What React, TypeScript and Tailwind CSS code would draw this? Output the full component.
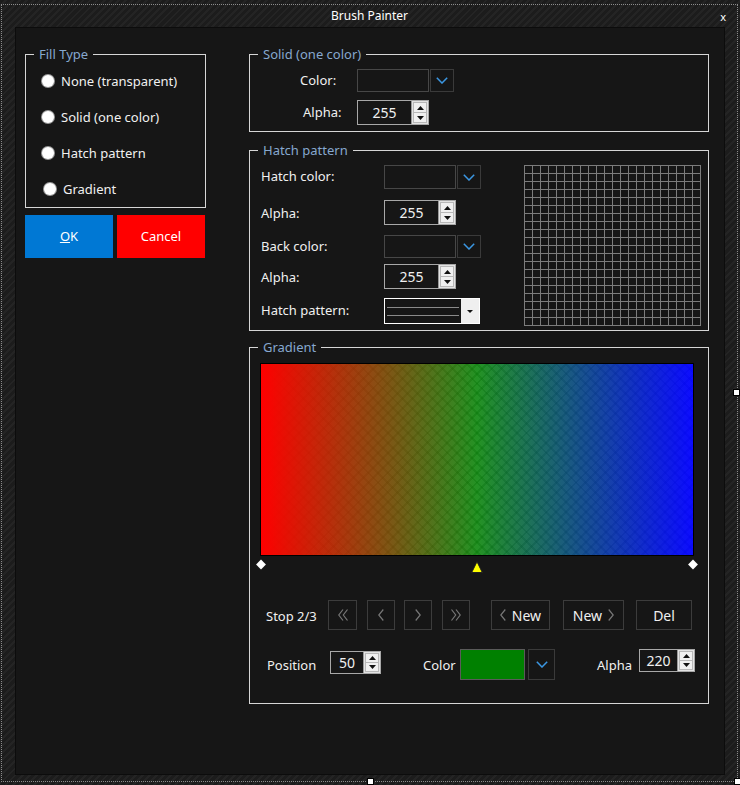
import React from 'react';

const fillTypes = ['None (transparent)', 'Solid (one color)', 'Hatch pattern', 'Gradient'];

function Group({ title, className, children }: { title: string; className?: string; children?: React.ReactNode }) {
    return (
        <div className={`relative border border-[#d6d6d6] ${className ?? ''}`}>
            <span className="absolute -top-[10px] left-[8px] bg-[#161616] px-[5px] leading-[18px] text-[#86a8cf]">{title}</span>
            {children}
        </div>
    );
}

function Chevron() {
    return (
        <svg width="12" height="7" viewBox="0 0 12 7">
            <path d="M0.8 0.8L6 6L11.2 0.8" fill="none" stroke="#3b97e3" strokeWidth="1.5" />
        </svg>
    );
}

function DropBtn({ w, h }: { w: string; h: string }) {
    return (
        <div className={`ml-[1px] flex items-center justify-center border border-[#3a3a3a] ${w} ${h}`}>
            <Chevron />
        </div>
    );
}

function Spinner() {
    return (
        <div className="flex w-[17px] flex-col self-stretch border-l border-[#9a9a9a] bg-[#e3e3e3] p-[1px]">
            <div className="flex flex-1 items-center justify-center border border-[#b8b8b8] bg-[#f0f0f0]">
                <svg width="7" height="4" viewBox="0 0 7 4"><path d="M3.5 0L7 4H0z" fill="#111" /></svg>
            </div>
            <div className="flex flex-1 items-center justify-center border border-t-0 border-[#b8b8b8] bg-[#f0f0f0]">
                <svg width="7" height="4" viewBox="0 0 7 4"><path d="M0 0H7L3.5 4z" fill="#111" /></svg>
            </div>
        </div>
    );
}

function NumBox({ value, w, h }: { value: string; w: string; h: string }) {
    return (
        <div className={`flex border border-[#a8a8a8] bg-[#161616] ${w} ${h}`}>
            <div className="flex flex-1 items-center justify-center pb-[1px] text-[14px]">{value}</div>
            <Spinner />
        </div>
    );
}

function ColorBox({ h }: { h: string }) {
    return <div className={`w-[72px] border border-[#474747] ${h}`} />;
}

function Arrow({ d, w = 6 }: { d: string; w?: number }) {
    return (
        <svg width={w} height="12" viewBox={`0 0 ${w} 12`}>
            <path d={d} fill="none" stroke="#777" strokeWidth="1.2" />
        </svg>
    );
}

function NavBtn({ className, children }: { className: string; children: React.ReactNode }) {
    return (
        <div className={`flex h-[30px] items-center justify-center gap-[6px] border border-[#3c3c3c] ${className}`}>
            {children}
        </div>
    );
}

function Handle({ className }: { className: string }) {
    return <div className={`absolute h-[7px] w-[7px] border border-black bg-white ${className}`} />;
}

export default function App() {
    const gridCols = Array.from({ length: 23 }, (_, i) => i * 8 + 0.5);
    const gridRows = Array.from({ length: 21 }, (_, i) => i * 8 + 0.5);

    return (
        <div className="relative h-[785px] w-[740px] overflow-hidden bg-[#1e1e1e] bg-[repeating-linear-gradient(135deg,#1c1c1c_0px,#1c1c1c_3px,#242424_3px,#242424_5px)] font-['Noto_Sans',sans-serif] text-[13px] text-[#f0f0f0]">
            <div className="ml-[1px] mt-[4px] flex h-[778px] w-[737px] flex-col border border-dotted border-[#8c8c8c]">
                {/* Title bar */}
                <div className="grid h-[22px] grid-cols-[1fr_auto_1fr] items-center">
                    <span />
                    <span className="text-[12px] leading-none text-white">Brush Painter</span>
                    <span className="justify-self-end pr-[11px] text-[11px] leading-none text-white">x</span>
                </div>

                {/* Client area */}
                <div className="mb-[6px] ml-[13px] mr-[12px] flex flex-1 border border-[#0c0c0c] bg-[#161616] pl-[9px] pt-[26px]">
                    {/* Left column */}
                    <div className="flex w-[181px] flex-col">
                        <Group title="Fill Type" className="h-[154px] pt-[8px]">
                            {fillTypes.map((t, i) => (
                                <div key={t} className={`flex h-[36px] items-center gap-[7px] pl-[16px] ${i === 3 ? 'ml-[2px]' : ''}`}>
                                    <span className="h-[12px] w-[12px] rounded-full bg-white shadow-[0_0_0_1px_#9a9a9a]" />
                                    <span className="pt-[1px]">{t}</span>
                                </div>
                            ))}
                        </Group>
                        <div className="mt-[7px] flex gap-[4px]">
                            <button className="flex h-[43px] w-[88px] items-center justify-center bg-[#0078d4] text-white">
                                <span><span className="underline">O</span>K</span>
                            </button>
                            <button className="flex h-[43px] w-[88px] items-center justify-center bg-[#ff0000] text-white">
                                Cancel
                            </button>
                        </div>
                    </div>

                    {/* Right column */}
                    <div className="ml-[43px] flex w-[460px] flex-col">
                        {/* Solid */}
                        <Group title="Solid (one color)" className="h-[78px] pl-[50px] pt-[14px]">
                            <div className="flex h-[23px] items-center">
                                <span className="w-[57px]">Color:</span>
                                <ColorBox h="h-[23px]" />
                                <DropBtn w="w-[24px]" h="h-[23px]" />
                            </div>
                            <div className="mt-[8px] flex h-[25px] items-center">
                                <span className="w-[57px] pl-[3px]">Alpha:</span>
                                <NumBox value="255" w="w-[72px]" h="h-[25px]" />
                            </div>
                        </Group>

                        {/* Hatch */}
                        <Group title="Hatch pattern" className="mt-[18px] flex h-[181px] items-start">
                            <div className="flex flex-col pl-[11px] pt-[14px]">
                                <div className="flex h-[24px] items-center">
                                    <span className="w-[123px]">Hatch color:</span>
                                    <ColorBox h="h-[24px]" />
                                    <DropBtn w="w-[24px]" h="h-[24px]" />
                                </div>
                                <div className="mt-[11px] flex h-[25px] items-center">
                                    <span className="w-[123px] pt-[3px]">Alpha:</span>
                                    <NumBox value="255" w="w-[72px]" h="h-[25px]" />
                                </div>
                                <div className="mt-[10px] flex h-[23px] items-center">
                                    <span className="w-[123px]">Back color:</span>
                                    <ColorBox h="h-[23px]" />
                                    <DropBtn w="w-[24px]" h="h-[23px]" />
                                </div>
                                <div className="mt-[6px] flex h-[25px] items-center">
                                    <span className="w-[123px] pt-[3px]">Alpha:</span>
                                    <NumBox value="255" w="w-[72px]" h="h-[25px]" />
                                </div>
                                <div className="mt-[9px] flex h-[26px] items-center">
                                    <span className="w-[123px]">Hatch pattern:</span>
                                    <div className="flex h-[26px] w-[96px] border border-white">
                                        <div className="flex flex-1 flex-col justify-center gap-[7px] px-[2px]">
                                            <div className="h-px bg-[#8a8a8a]" />
                                            <div className="h-px bg-[#8a8a8a]" />
                                        </div>
                                        <div className="flex w-[18px] items-center justify-center bg-[#efefef]">
                                            <svg width="6" height="3" viewBox="0 0 6 3"><path d="M0 0H6L3 3z" fill="#111" /></svg>
                                        </div>
                                    </div>
                                </div>
                            </div>
                            <svg className="ml-auto mr-[7px] mt-[14px]" width="177" height="161" viewBox="0 0 177 161">
                                {gridCols.map(x => (
                                    <line key={`c${x}`} x1={Math.min(x, 176.5)} y1="0" x2={Math.min(x, 176.5)} y2="161" stroke="#7c7c7c" strokeWidth="1" />
                                ))}
                                {gridRows.map(y => (
                                    <line key={`r${y}`} x1="0" y1={y} x2="177" y2={y} stroke="#7c7c7c" strokeWidth="1" />
                                ))}
                            </svg>
                        </Group>

                        {/* Gradient */}
                        <Group title="Gradient" className="mt-[16px] h-[357px] pl-[10px] pt-[15px]">
                            <div className="h-[193px] w-[434px] border border-black bg-white bg-[linear-gradient(to_right,rgba(255,0,0,1),rgba(0,128,0,0.86),rgba(0,0,255,0.95)),repeating-linear-gradient(45deg,rgba(0,0,0,0.28)_0px,rgba(0,0,0,0.28)_2px,transparent_2px,transparent_7px),repeating-linear-gradient(-45deg,rgba(0,0,0,0.28)_0px,rgba(0,0,0,0.28)_2px,transparent_2px,transparent_7px)]" />
                            <div className="relative ml-[1px] h-[20px] w-[432px]">
                                <div className="absolute left-0 top-[5px] h-[7px] w-[7px] -translate-x-1/2 rotate-45 bg-white" />
                                <svg className="absolute left-1/2 top-[5px] -translate-x-1/2" width="12" height="12" viewBox="0 0 12 12">
                                    <path d="M6 0.7L11.3 11.5H0.7z" fill="#ffff00" stroke="#222" strokeWidth="1" />
                                </svg>
                                <div className="absolute left-full top-[5px] h-[7px] w-[7px] -translate-x-1/2 rotate-45 bg-white" />
                            </div>

                            {/* Stop navigation */}
                            <div className="mt-[24px] flex items-center pl-[6px]">
                                <span className="w-[62px] pt-[3px]">Stop 2/3</span>
                                <NavBtn className="w-[29px]">
                                    <Arrow w={10} d="M5 0.5L0.8 6L5 11.5M9.5 0.5L5.3 6L9.5 11.5" />
                                </NavBtn>
                                <NavBtn className="ml-[10px] w-[28px]">
                                    <Arrow d="M5.3 0.5L0.8 6L5.3 11.5" />
                                </NavBtn>
                                <NavBtn className="ml-[9px] w-[28px]">
                                    <Arrow d="M0.7 0.5L5.2 6L0.7 11.5" />
                                </NavBtn>
                                <NavBtn className="ml-[10px] w-[28px]">
                                    <Arrow w={10} d="M0.5 0.5L4.7 6L0.5 11.5M5 0.5L9.2 6L5 11.5" />
                                </NavBtn>
                                <NavBtn className="ml-[21px] w-[59px]">
                                    <Arrow d="M5.3 0.5L0.8 6L5.3 11.5" />
                                    <span className="text-[14px]">New</span>
                                </NavBtn>
                                <NavBtn className="ml-[13px] w-[61px]">
                                    <span className="text-[14px]">New</span>
                                    <Arrow d="M0.7 0.5L5.2 6L0.7 11.5" />
                                </NavBtn>
                                <NavBtn className="ml-[12px] w-[56px]">
                                    <span className="text-[14px]">Del</span>
                                </NavBtn>
                            </div>

                            {/* Stop properties */}
                            <div className="mt-[19px] flex h-[31px] items-center pl-[7px]">
                                <span className="w-[63px] pt-[2px]">Position</span>
                                <div className="mb-[4px]">
                                    <NumBox value="50" w="w-[51px]" h="h-[23px]" />
                                </div>
                                <span className="ml-[42px] w-[37px] pt-[2px]">Color</span>
                                <div className="h-[31px] w-[65px] border border-[#5a5a5a] bg-[#008000]" />
                                <div className="ml-[3px] flex h-[31px] w-[27px] items-center justify-center border border-[#3a3a3a]">
                                    <Chevron />
                                </div>
                                <span className="ml-[42px] w-[42px] pt-[2px]">Alpha</span>
                                <div className="mb-[8px]">
                                    <NumBox value="220" w="w-[56px]" h="h-[23px]" />
                                </div>
                            </div>
                        </Group>
                    </div>
                </div>
            </div>

            <Handle className="left-[367px] top-[778px]" />
            <Handle className="left-[733px] top-[389px]" />
            <Handle className="left-[734px] top-[778px]" />
        </div>
    );
}
